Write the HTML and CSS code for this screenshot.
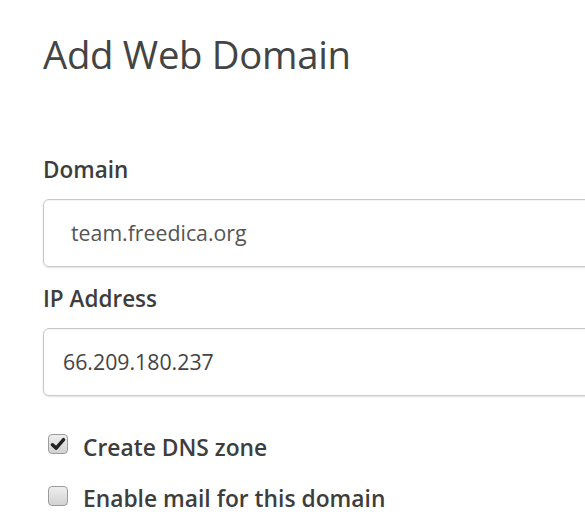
FILE: index.html
```html
<!DOCTYPE html>
<html>
<head>
<meta charset="utf-8">
<link rel="stylesheet" href="styles.css">
</head>
<body>
<div class="page">
  <h1 class="title">Add Web Domain</h1>
  <form class="form">
    <div class="field">
      <label class="label">Domain</label>
      <div class="input input-domain">team.freedica.org</div>
    </div>
    <div class="field">
      <label class="label">IP Address</label>
      <div class="input input-ip">66.209.180.237</div>
    </div>
    <div class="check-row first">
      <span class="box">
        <svg viewBox="0 0 20 20" width="18" height="18"><path d="M3.8 10.8 L8 14.6 L16.2 5.2" fill="none" stroke="#222" stroke-width="3.8" stroke-linecap="round" stroke-linejoin="round"/></svg>
      </span>
      <span class="check-label">Create DNS zone</span>
    </div>
    <div class="check-row second">
      <span class="box"></span>
      <span class="check-label">Enable mail for this domain</span>
    </div>
  </form>
</div>
</body>
</html>
```
FILE: styles.css
```css
html, body {
  margin: 0;
  padding: 0;
  background: #ffffff;
  overflow: hidden;
}
.page {
  padding: 27px 0 0 43px;
  font-family: "Open Sans", "DejaVu Sans", sans-serif;
  color: #444;
  width: 620px;
}
.title {
  margin: 0;
  font-size: 38.3px;
  font-weight: 400;
  line-height: 54px;
  color: #444;
  letter-spacing: -0.3px;
}
.form {
  margin-top: 75px;
}
.field {
  margin-bottom: 18px;
}
.label {
  display: block;
  font-size: 22.5px;
  font-weight: 600;
  line-height: 28px;
  color: #3d3d3d;
  margin-bottom: 15px;
}
.input {
  box-sizing: border-box;
  width: 600px;
  height: 68px;
  border: 1px solid #c9c9c9;
  border-radius: 6px;
  box-shadow: 0 1px 2px rgba(0,0,0,0.12), inset 0 1px 1px rgba(0,0,0,0.04);
  display: flex;
  align-items: center;
  padding-bottom: 2px;
  font-size: 21.3px;
  color: #555;
}
.input-domain { padding-left: 27px; }
.input-ip { padding-left: 19px; color: #444; }
.check-row {
  display: flex;
  align-items: flex-start;
  margin-left: 5px;
}
.check-row.first { margin-top: 37px; }
.check-row.second { margin-top: 21px; }
.box {
  box-sizing: border-box;
  width: 20px;
  height: 20px;
  border: 1px solid #9c9c9c;
  border-radius: 4px;
  background: linear-gradient(#eeeeee, #d2d2d2);
  display: flex;
  align-items: center;
  justify-content: center;
  margin-right: 15px;
  margin-top: 1px;
}
.second .box { margin-top: 2px; }
.box svg { display: block; }
.check-label {
  font-size: 22.8px;
  font-weight: 600;
  line-height: 30px;
  color: #3d3d3d;
}
```
